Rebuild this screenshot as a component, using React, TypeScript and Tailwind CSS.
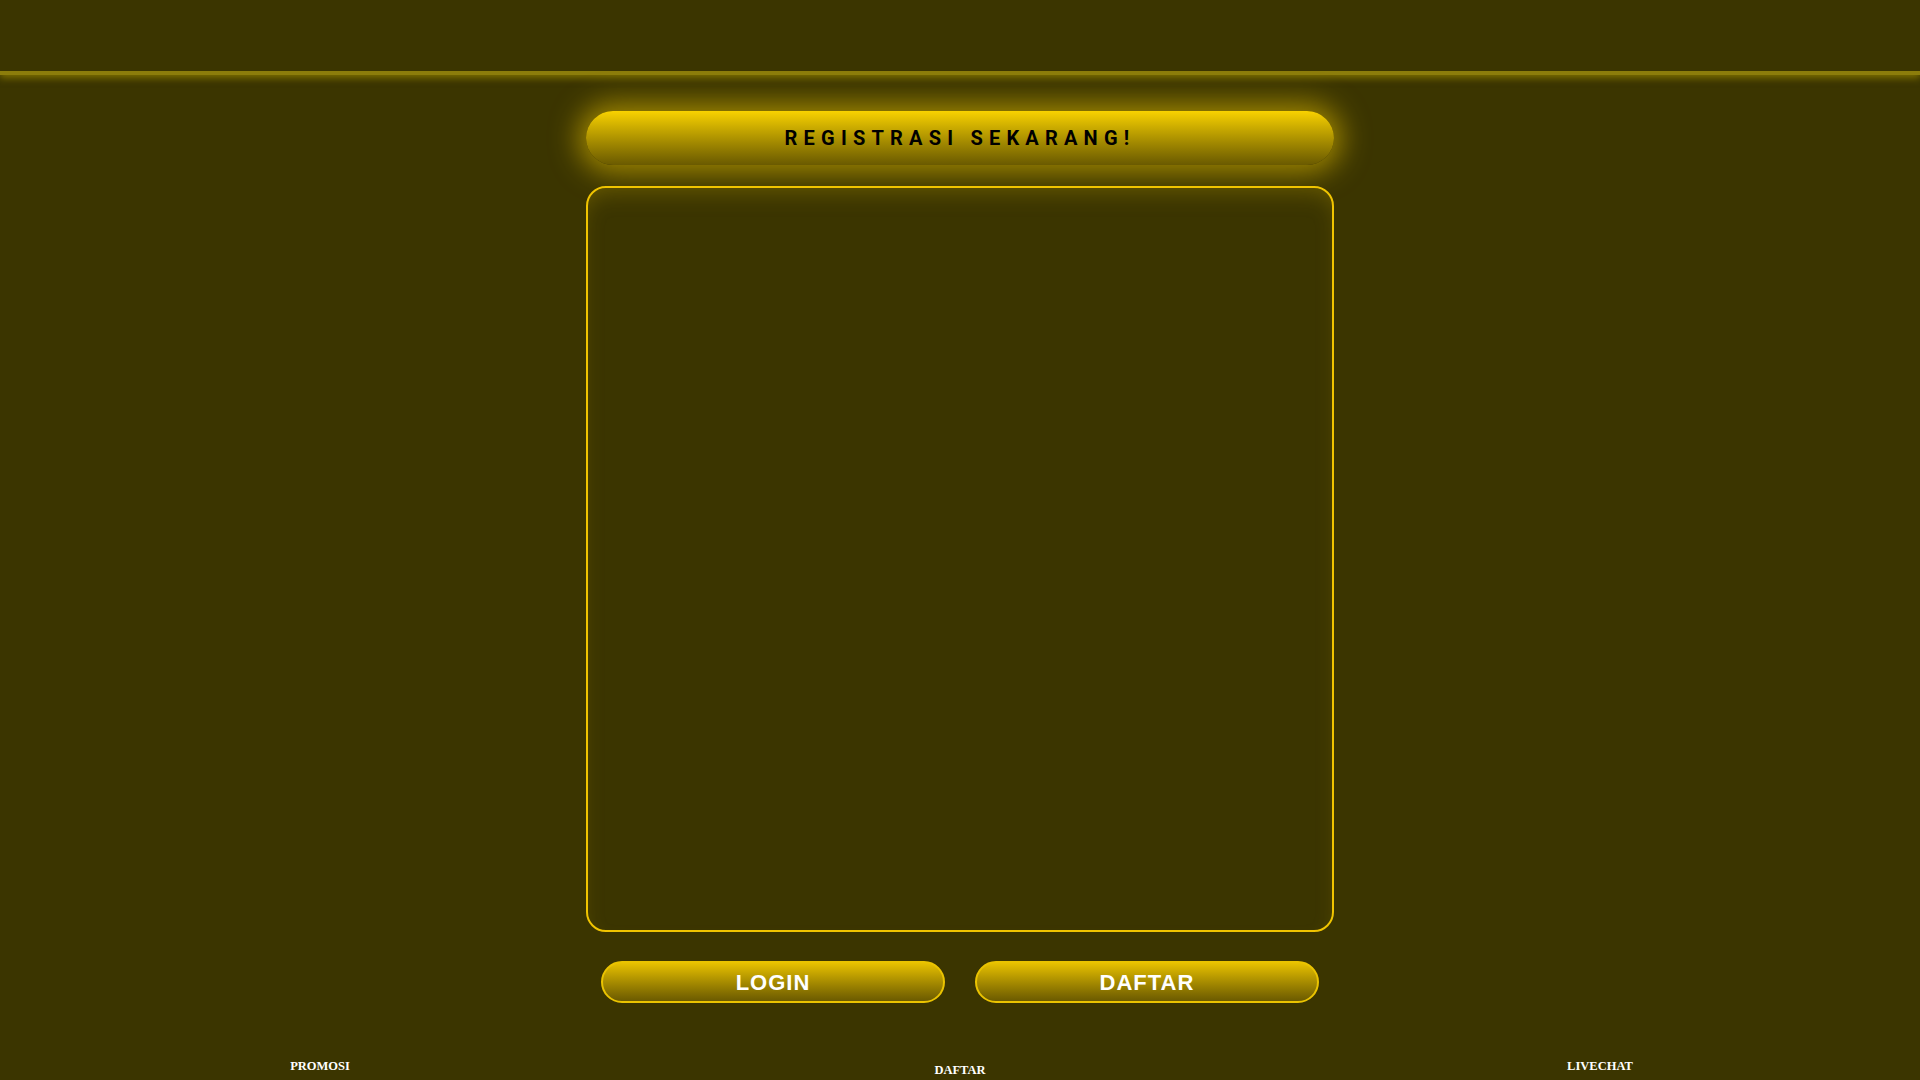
export default function App() {
  return (
    <div className="min-h-screen w-full bg-[#3b3500] overflow-hidden" style={{ fontFamily: '"Liberation Sans", Arial, sans-serif' }}>
      <header className="h-[75px] w-full bg-[#3b3500] border-b-[4px] border-[#8c7d0b] shadow-[0_3px_7px_rgba(170,150,0,0.6)]" />
      <main className="mx-auto w-[748px] pt-[36px]">
        <div className="h-[54px] w-full rounded-full bg-gradient-to-b from-[#f9d200] to-[#6a5a00] shadow-[0_0_28px_8px_rgba(240,200,0,0.55)] flex items-center justify-center">
          <span className="text-[20px] font-bold text-black tracking-[6.2px]" style={{ fontFamily: 'Roboto, "Liberation Sans", sans-serif' }}>REGISTRASI SEKARANG!</span>
        </div>
        <div className="mt-[21px] h-[746px] w-full rounded-[20px] border-2 border-[#f0c400] bg-[#3b3500] shadow-[inset_0_12px_24px_-10px_rgba(200,170,0,0.35)]" />
        <div className="mt-[29px] px-[15px] grid grid-cols-2 gap-[30px]">
          <button className="h-[42px] rounded-full border-2 border-[#eac300] bg-gradient-to-b from-[#e8c100] to-[#6b5a00] text-white text-[22px] font-bold tracking-[1px] flex items-center justify-center">
            LOGIN
          </button>
          <button className="h-[42px] rounded-full border-2 border-[#eac300] bg-gradient-to-b from-[#e8c100] to-[#6b5a00] text-white text-[22px] font-bold tracking-[1px] flex items-center justify-center">
            DAFTAR
          </button>
        </div>
      </main>
      <nav className="mt-[54px] grid grid-cols-3 w-full text-white font-bold text-[12.5px]" style={{ fontFamily: '"Liberation Serif", "Times New Roman", serif' }}>
        <div className="text-center">PROMOSI</div>
        <div className="text-center mt-[4px]">DAFTAR</div>
        <div className="text-center">LIVECHAT</div>
      </nav>
    </div>
  );
}
